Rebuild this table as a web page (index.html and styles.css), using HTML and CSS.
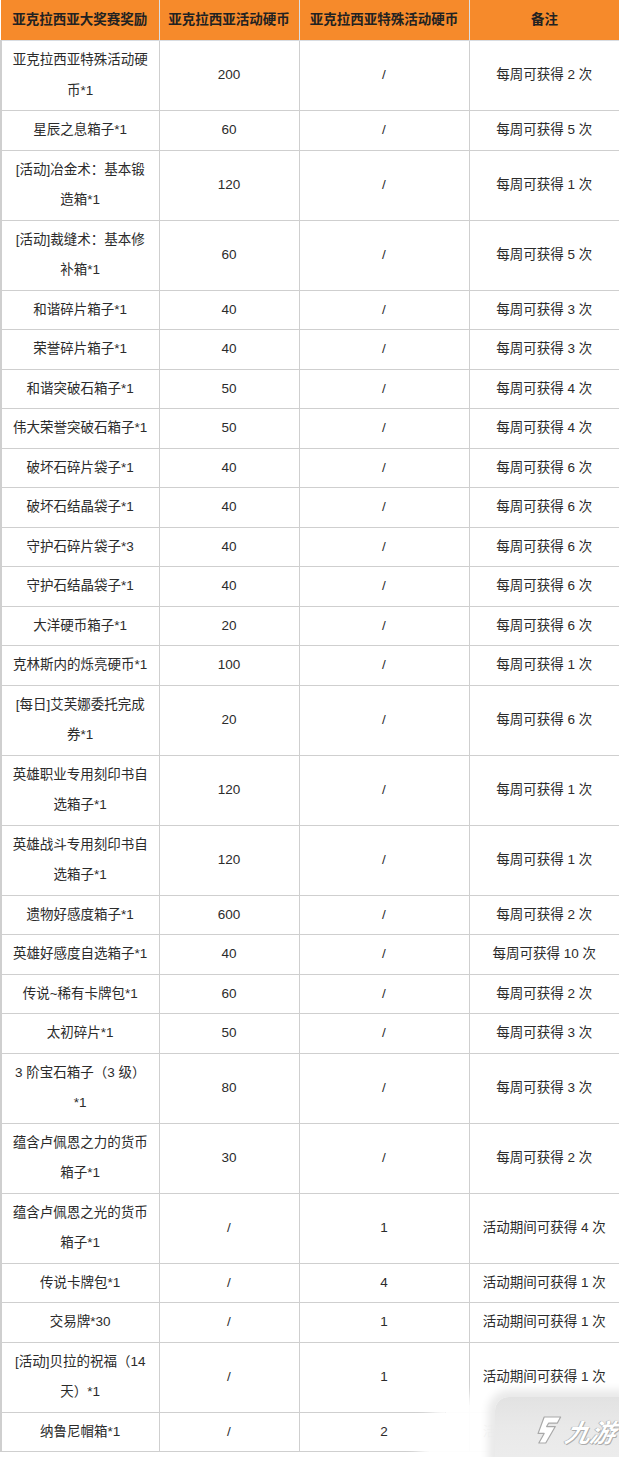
FILE: index.html
```html
<!DOCTYPE html>
<html lang="zh-CN">
<head>
<meta charset="utf-8">
<title>亚克拉西亚大奖赛奖励</title>
<link rel="stylesheet" href="styles.css">
</head>
<body>
<div class="page">
<table class="rewards">
  <colgroup>
    <col class="c1"><col class="c2"><col class="c3"><col class="c4">
  </colgroup>
  <thead>
    <tr><th>亚克拉西亚大奖赛奖励</th><th>亚克拉西亚活动硬币</th><th>亚克拉西亚特殊活动硬币</th><th>备注</th></tr>
  </thead>
  <tbody>
    <tr><td>亚克拉西亚特殊活动硬<br>币*1</td><td>200</td><td>/</td><td>每周可获得 2 次</td></tr>
    <tr><td>星辰之息箱子*1</td><td>60</td><td>/</td><td>每周可获得 5 次</td></tr>
    <tr><td>[活动]冶金术：基本锻<br>造箱*1</td><td>120</td><td>/</td><td>每周可获得 1 次</td></tr>
    <tr><td>[活动]裁缝术：基本修<br>补箱*1</td><td>60</td><td>/</td><td>每周可获得 5 次</td></tr>
    <tr><td>和谐碎片箱子*1</td><td>40</td><td>/</td><td>每周可获得 3 次</td></tr>
    <tr><td>荣誉碎片箱子*1</td><td>40</td><td>/</td><td>每周可获得 3 次</td></tr>
    <tr><td>和谐突破石箱子*1</td><td>50</td><td>/</td><td>每周可获得 4 次</td></tr>
    <tr><td>伟大荣誉突破石箱子*1</td><td>50</td><td>/</td><td>每周可获得 4 次</td></tr>
    <tr><td>破坏石碎片袋子*1</td><td>40</td><td>/</td><td>每周可获得 6 次</td></tr>
    <tr><td>破坏石结晶袋子*1</td><td>40</td><td>/</td><td>每周可获得 6 次</td></tr>
    <tr><td>守护石碎片袋子*3</td><td>40</td><td>/</td><td>每周可获得 6 次</td></tr>
    <tr><td>守护石结晶袋子*1</td><td>40</td><td>/</td><td>每周可获得 6 次</td></tr>
    <tr><td>大洋硬币箱子*1</td><td>20</td><td>/</td><td>每周可获得 6 次</td></tr>
    <tr><td>克林斯内的烁亮硬币*1</td><td>100</td><td>/</td><td>每周可获得 1 次</td></tr>
    <tr><td>[每日]艾芙娜委托完成<br>券*1</td><td>20</td><td>/</td><td>每周可获得 6 次</td></tr>
    <tr><td>英雄职业专用刻印书自<br>选箱子*1</td><td>120</td><td>/</td><td>每周可获得 1 次</td></tr>
    <tr><td>英雄战斗专用刻印书自<br>选箱子*1</td><td>120</td><td>/</td><td>每周可获得 1 次</td></tr>
    <tr><td>遗物好感度箱子*1</td><td>600</td><td>/</td><td>每周可获得 2 次</td></tr>
    <tr><td>英雄好感度自选箱子*1</td><td>40</td><td>/</td><td>每周可获得 10 次</td></tr>
    <tr><td>传说~稀有卡牌包*1</td><td>60</td><td>/</td><td>每周可获得 2 次</td></tr>
    <tr><td>太初碎片*1</td><td>50</td><td>/</td><td>每周可获得 3 次</td></tr>
    <tr><td>3 阶宝石箱子（3 级）<br>*1</td><td>80</td><td>/</td><td>每周可获得 3 次</td></tr>
    <tr><td>蕴含卢佩恩之力的货币<br>箱子*1</td><td>30</td><td>/</td><td>每周可获得 2 次</td></tr>
    <tr><td>蕴含卢佩恩之光的货币<br>箱子*1</td><td>/</td><td>1</td><td>活动期间可获得 4 次</td></tr>
    <tr><td>传说卡牌包*1</td><td>/</td><td>4</td><td>活动期间可获得 1 次</td></tr>
    <tr><td>交易牌*30</td><td>/</td><td>1</td><td>活动期间可获得 1 次</td></tr>
    <tr><td>[活动]贝拉的祝福（14<br>天）*1</td><td>/</td><td>1</td><td>活动期间可获得 1 次</td></tr>
    <tr><td>纳鲁尼帽箱*1</td><td>/</td><td>2</td><td>活动期间可获得 1 次</td></tr>
  </tbody>
</table>
<div class="wm-glow"></div>
<div class="watermark">
  <svg class="wm-logo" viewBox="0 0 30 34" width="26" height="32">
    <path d="M9 2 L28 2 L25 9 L15 9 L13 13 L23 13 L14 32 L6 32 L11 21 L4 21 Z" fill="#ffffff" stroke="#a9a9a9" stroke-width="1.4" stroke-linejoin="round"/>
  </svg>
  <span class="wm-text">九游</span>
</div>
</div>
</body>
</html>
```
FILE: styles.css
```css
html, body {
  margin: 0;
  padding: 0;
  background: #ffffff;
}
.page {
  position: relative;
  width: 619px;
  height: 1457px;
  overflow: hidden;
}
.rewards {
  width: 619px;
  border-collapse: collapse;
  table-layout: fixed;
  font-family: "Liberation Sans", "Noto Sans CJK SC", sans-serif;
  font-size: 13.5px;
  color: #2b2b2b;
}
.c1 { width: 158px; }
.c2 { width: 140px; }
.c3 { width: 170px; }
.c4 { width: 151px; }
.rewards th {
  background: #f68a2b;
  color: #222222;
  font-weight: bold;
  height: 40px;
  padding: 0 2px;
  line-height: 30px;
  border: 1px solid #d9dde2;
  border-top: none;
  text-align: center;
  white-space: nowrap;
}
.rewards th:first-child { border-left: none; }
.rewards td {
  border: 1px solid #cfcfcf;
  padding: 4px 6px;
  line-height: 30.5px;
  text-align: center;
  vertical-align: middle;
  white-space: nowrap;
}
.rewards td:first-child { border-left: 2px solid #cfcfcf; }
.rewards td:last-child { border-right: 2px solid #cfcfcf; }
.wm-glow {
  position: absolute;
  right: -20px;
  bottom: -10px;
  width: 210px;
  height: 62px;
  border-radius: 40px 0 0 0;
  background: rgba(255,255,255,0.96);
  box-shadow: 0 0 14px 10px rgba(255,255,255,0.96);
}
.watermark {
  position: absolute;
  right: 0;
  bottom: 0;
  width: 124px;
  height: 60px;
  display: flex;
  align-items: center;
  justify-content: flex-end;
  gap: 5px;
  padding-right: 3px;
  box-sizing: border-box;
  background: linear-gradient(180deg, #e2e2e2 0%, #e9e9e9 50%, #ececec 100%);
  box-shadow: 0 0 8px 7px #e9e9e9;
  border-top-left-radius: 14px;
}
.wm-logo {
  transform: skewX(-6deg);
  margin-top: 6px;
}
.wm-text {
  font-family: "Noto Sans CJK SC", sans-serif;
  font-weight: bold;
  font-style: italic;
  font-size: 25px;
  line-height: 1;
  color: #ffffff;
  transform: skewX(-12deg);
  margin-top: 8px;
  text-shadow: 0 0 1px #8f8f8f, 1px 1px 0 #b0b0b0, -1px 0 0 #c4c4c4;
}
```
